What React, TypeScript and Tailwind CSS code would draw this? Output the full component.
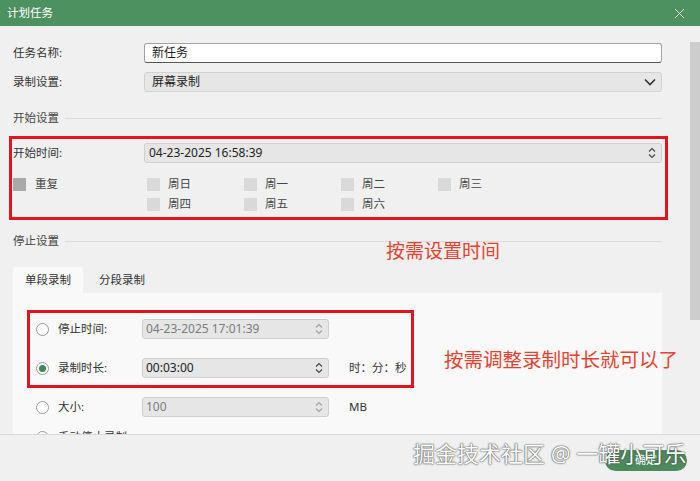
import { X } from "lucide-react";

const WEEK = [
  ["周日", "周一", "周二", "周三"],
  ["周四", "周五", "周六"],
];

function Spin({ dim }: { dim?: boolean }) {
  return (
    <svg width="10" height="16" viewBox="0 0 10 16" fill="none" stroke={dim ? "#a3a3a3" : "#444"} strokeWidth="1.1">
      <path d="M2 6.5 5 3.5 8 6.5" />
      <path d="M2 9.5 5 12.5 8 9.5" />
    </svg>
  );
}

function Section({ title }: { title: string }) {
  return (
    <div className="flex h-[16px] items-center gap-[6px] text-[11.5px] text-[#444]">
      <span>{title}</span>
      <div className="h-px flex-1 bg-[#dcdcdc]" />
    </div>
  );
}

function Check({ dark }: { dark?: boolean }) {
  return <div className={dark ? "h-[13px] w-[13px] bg-[#a9a9a9]" : "h-[13px] w-[13px] bg-[#d9d9d9]"} />;
}

function Radio({ checked }: { checked?: boolean }) {
  return (
    <div className="flex h-[13px] w-[13px] items-center justify-center rounded-full border border-[#9a9a9a] bg-white">
      {checked && <div className="h-[7px] w-[7px] rounded-full bg-[#3f8a57]" />}
    </div>
  );
}

function RadioRow({ label, value, unit, checked }: { label: string; value?: string; unit?: string; checked?: boolean }) {
  return (
    <div className="flex h-[20px] items-center">
      <div className="flex w-[106px] items-center gap-[9px]">
        <Radio checked={checked} />
        <span>{label}</span>
      </div>
      {value !== undefined && (
        <div
          className={`flex h-[20px] w-[187px] items-center justify-between rounded-[3px] border border-[#cfcfcf] bg-[#e6e6e6] pl-[3px] pr-[4px] text-[12px] ${
            checked ? "text-[#222]" : "text-[#7c7c7c]"
          }`}
        >
          <span>{value}</span>
          <Spin dim={!checked} />
        </div>
      )}
      {unit && <span className="ml-[20px]">{unit}</span>}
    </div>
  );
}

export default function App() {
  return (
    <div className="flex h-[481px] w-[700px] flex-col overflow-hidden bg-[#f0f0f0] font-['Noto_Sans','Noto_Sans_CJK_SC',sans-serif] text-[11.5px] text-[#333]">
      {/* title bar */}
      <div className="flex h-[26px] shrink-0 items-center justify-between bg-[#4e9160] pl-[7px] pr-[12px] text-white">
        <span>计划任务</span>
        <X className="h-[17px] w-[17px]" strokeWidth={1.1} />
      </div>

      <div className="flex min-h-0 flex-1 overflow-hidden">
        <div className="relative min-w-0 flex-1 pl-[13px] pr-[28px] pt-[17px]">
          <div className="flex h-[20px] items-center">
            <span className="w-[131px]">任务名称:</span>
            <div className="flex h-[20px] flex-1 items-center rounded-[3px] border border-[#a3a3a3] border-b-[#555] bg-white pl-[7px] text-[12px] text-[#222]">
              新任务
            </div>
          </div>
          <div className="mt-[9px] flex h-[20px] items-center">
            <span className="w-[131px]">录制设置:</span>
            <div className="flex h-[20px] flex-1 items-center justify-between rounded-[3px] border border-[#d2d2d2] bg-[#e6e6e6] pl-[7px] pr-[5px] text-[12px] text-[#222]">
              <span>屏幕录制</span>
              <svg width="12" height="8" viewBox="0 0 12 8" fill="none" stroke="#333" strokeWidth="1.6">
                <path d="M1 1.5 6 6.5 11 1.5" />
              </svg>
            </div>
          </div>

          <div className="mt-[18px]">
            <Section title="开始设置" />
          </div>

          <div className="-ml-[4px] -mr-[6px] mt-[10px] border-[3px] border-[#e3151c] pb-[3px] pl-[1px] pr-[3px] pt-[4px]">
            <div className="flex h-[20px] items-center">
              <span className="w-[131px]">开始时间:</span>
              <div className="flex h-[20px] flex-1 items-center justify-between rounded-[3px] border border-[#cfcfcf] bg-[#e6e6e6] pl-[4px] pr-[4px] text-[12px] text-[#222]">
                <span>04-23-2025 16:58:39</span>
                <Spin />
              </div>
            </div>
            <div className="mt-[11px] flex text-[#444]">
              <div className="flex h-[20px] w-[134px] items-center gap-[9px]">
                <Check dark />
                <span>重复</span>
              </div>
              <div className="flex flex-col">
                {WEEK.map((row, i) => (
                  <div key={i} className="flex h-[20px] items-center">
                    {row.map((d) => (
                      <div key={d} className="flex w-[97px] items-center gap-[8px]">
                        <Check />
                        <span>{d}</span>
                      </div>
                    ))}
                  </div>
                ))}
              </div>
            </div>
          </div>

          <div className="mt-[13px]">
            <Section title="停止设置" />
          </div>

          <div className="mt-[18px] flex h-[26px] items-stretch">
            <div className="flex items-center rounded-t-[2px] bg-[#f9f9f9] px-[12px]">单段录制</div>
            <div className="flex items-center pl-[16px]">分段录制</div>
          </div>
          <div className="bg-[#f9f9f9] pb-[20px] pl-[14px] pt-[17px]">
            <div className="w-[387px] border-[3px] border-[#e3151c] pb-[7px] pl-[6px] pt-[6px]">
              <RadioRow label="停止时间:" value="04-23-2025 17:01:39" />
              <div className="mt-[19px]">
                <RadioRow label="录制时长:" value="00:03:00" unit="时：分：秒" checked />
              </div>
            </div>
            <div className="mt-[9px] pl-[9px]">
              <RadioRow label="大小:" value="100" unit="MB" />
            </div>
            <div className="mt-[10px] pl-[9px]">
              <RadioRow label="手动停止录制" />
            </div>
          </div>

          <span className="absolute left-[386px] top-[216px] text-[19px] leading-none text-[#e8412f]">按需设置时间</span>
          <span className="absolute left-[444px] top-[324px] text-[19.5px] leading-none text-[#e8412f]">按需调整录制时长就可以了</span>
        </div>

        {/* scrollbar */}
        <div className="w-[10px] shrink-0 pt-[16px]">
          <div className="h-[278px] bg-[#cdcdcd]" />
        </div>
      </div>

      <div className="relative flex h-[47px] shrink-0 justify-end border-t border-[#d9d9d9] pr-[13px] pt-[15px]">
        <div className="flex h-[21px] w-[82px] items-center justify-center rounded-full bg-[#4a8a5b] text-[11px] text-white">确定</div>
        <span className="absolute left-[413px] top-[7px] text-[22px] leading-none text-white [text-shadow:0_0_1px_#333,0_0_2px_#555]">
          掘金技术社区 @ 一罐小可乐
        </span>
      </div>
    </div>
  );
}
